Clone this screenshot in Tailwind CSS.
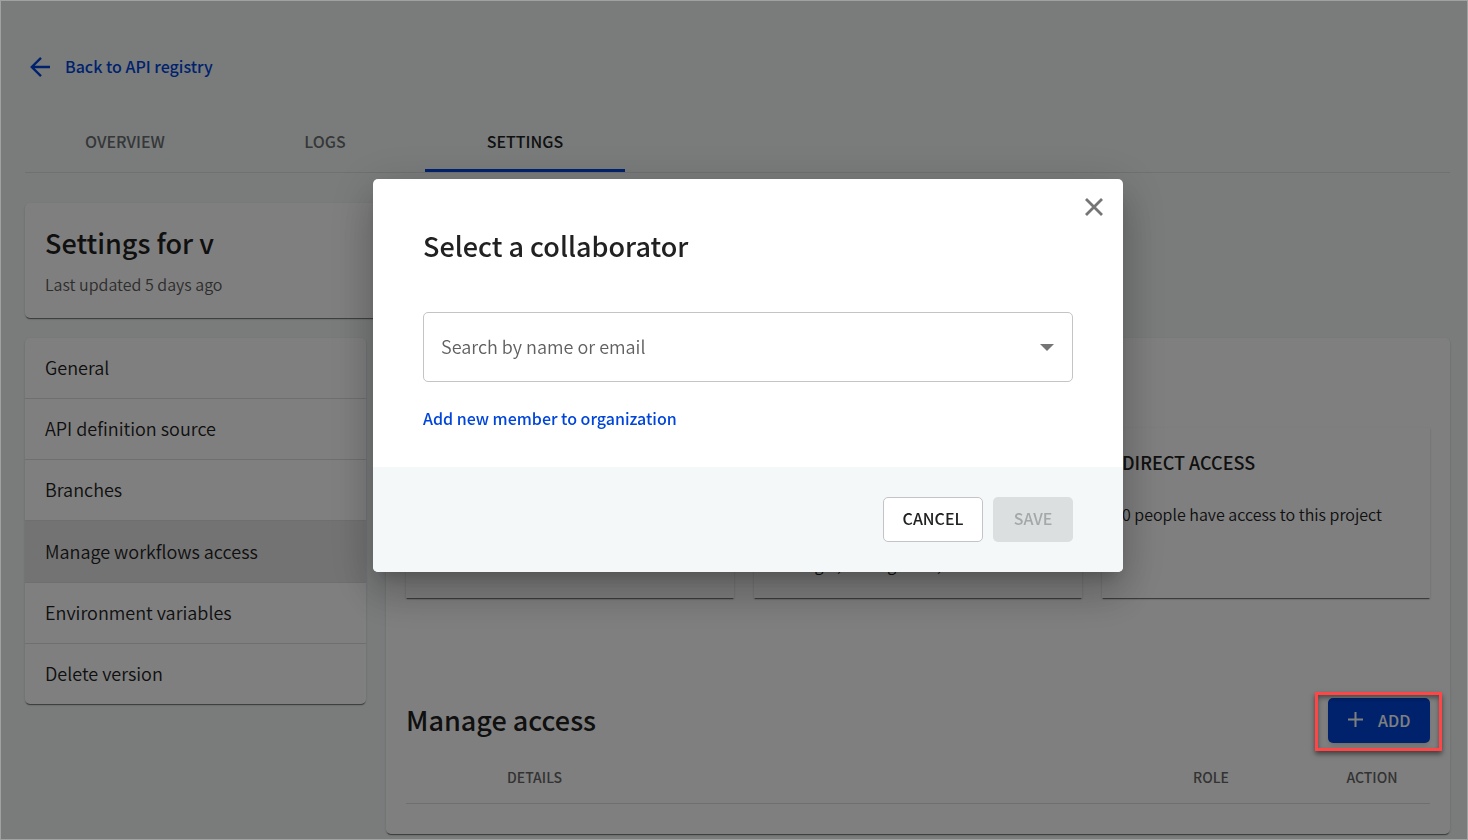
<!DOCTYPE html>
<html lang="en">
<head>
<meta charset="utf-8">
<meta name="viewport" content="width=device-width, initial-scale=1">
<title>API registry settings</title>
<script src="https://cdn.jsdelivr.net/npm/@tailwindcss/browser@4"></script>
</head>
<body class="min-h-screen bg-[#f4f8f9] font-['Noto_Sans_CJK_SC','Open_Sans',sans-serif] text-[#212121] overflow-hidden">
<main class="pl-[25px] pr-[18px] pt-[54px] pb-[6px]">
  <a href="#" class="flex w-fit items-center gap-[13px] h-6 pl-[3px] text-base font-medium text-[#0045db]">
    <svg class="size-6" viewBox="0 0 24 24" fill="none" stroke="currentColor" stroke-width="2.4" aria-hidden="true"><path d="M22 13H3.800M13 3.800L3.800 13L13 22.200"/></svg>
    Back to API registry
  </a>
  <nav class="mt-[34px] flex h-[61px] border-b border-[#e0e0e8] text-base font-medium text-[#6b6f70]">
    <button class="w-[200px] pb-[2px]">OVERVIEW</button>
    <button class="w-[200px] pb-[2px]">LOGS</button>
    <button class="w-[200px] border-b-3 pt-px border-[#0045db] text-[#212121]">SETTINGS</button>
  </nav>
  <section class="mt-[30px] h-[115px] max-w-4xl rounded-[5px] bg-white px-5 pt-[22px] shadow-[0_2px_1px_-1px_rgba(0,0,0,0.4),0_1px_1px_rgba(0,0,0,0.14),0_1px_3px_rgba(0,0,0,0.12)]">
    <h1 class="text-[27px] leading-9 font-medium">Settings for v</h1>
    <p class="mt-[11px] text-base leading-6 font-[350] text-[#5a5a5a]">Last updated 5 days ago</p>
  </section>
  <div class="mt-5 flex items-start gap-5">
    <ul class="w-[341px] shrink-0 overflow-hidden rounded-[5px] bg-white text-lg font-[350] shadow-[0_2px_1px_-1px_rgba(0,0,0,0.4),0_1px_1px_rgba(0,0,0,0.14),0_1px_3px_rgba(0,0,0,0.12)]">
      <li class="border-b border-[#dedede]"><a href="#" class="flex h-[60px] items-center px-5 pb-[2px]">General</a></li>
      <li class="border-b border-[#dedede]"><a href="#" class="flex h-[60px] items-center px-5 pb-[2px]">API definition source</a></li>
      <li class="border-b border-[#dedede]"><a href="#" class="flex h-[60px] items-center px-5 pb-[2px]">Branches</a></li>
      <li class="border-b border-[#dedede] bg-[#e6e6e6]"><a href="#" class="flex h-[61px] items-center px-5 pb-px">Manage workflows access</a></li>
      <li class="border-b border-[#dedede]"><a href="#" class="flex h-[60px] items-center px-5 pb-[2px]">Environment variables</a></li>
      <li><a href="#" class="flex h-[60px] items-center px-5 pb-[2px]">Delete version</a></li>
    </ul>
    <section class="min-w-0 grow rounded-[5px] bg-white px-5 pt-[90px] pb-[30px] shadow-[0_2px_1px_-1px_rgba(0,0,0,0.4),0_1px_1px_rgba(0,0,0,0.14),0_1px_3px_rgba(0,0,0,0.12)]">
      <div class="grid h-[170px] grid-cols-3 gap-5">
        <article class="bg-white shadow-[0_2px_1px_-1px_rgba(0,0,0,0.4),0_1px_1px_rgba(0,0,0,0.14),0_1px_3px_rgba(0,0,0,0.12)]"></article>
        <article class="bg-white px-5 pt-[22px] shadow-[0_2px_1px_-1px_rgba(0,0,0,0.4),0_1px_1px_rgba(0,0,0,0.14),0_1px_3px_rgba(0,0,0,0.12)]">
          <p class="mt-[102px] text-base leading-6 font-[350]">Manager, manage role,</p>
        </article>
        <article class="bg-white px-5 pt-[22px] shadow-[0_2px_1px_-1px_rgba(0,0,0,0.4),0_1px_1px_rgba(0,0,0,0.14),0_1px_3px_rgba(0,0,0,0.12)]">
          <h3 class="text-lg leading-6 font-medium">DIRECT ACCESS</h3>
          <p class="mt-7 text-base leading-6 font-[350]">0 people have access to this project</p>
        </article>
      </div>
      <div class="mt-[100px] flex h-[45px] items-center justify-between">
        <h2 class="pb-[2px] text-[27px] leading-9 font-medium">Manage access</h2>
        <div class="relative">
          <button class="flex h-[45px] w-[102px] items-center gap-3 rounded-[5px] bg-[#0045db] pl-[17px] pb-[2px] text-base font-medium text-white shadow-md">
            <svg class="size-[21px]" viewBox="0 0 21 21" fill="none" stroke="currentColor" stroke-width="2" aria-hidden="true"><path d="M10.500 3v15M3 10.500h15"/></svg>ADD
          </button>
          <div class="pointer-events-none absolute -left-[13px] -right-3 -top-[6px] -bottom-[8px] z-40 border-3 border-[#ff4545] shadow-[0_3px_5px_rgba(0,0,0,0.5),inset_0_3px_5px_rgba(0,0,0,0.4)]"></div>
        </div>
      </div>
      <table class="mt-[9px] w-full table-fixed text-sm font-medium text-[#666]">
        <thead><tr class="h-[51px] border-b border-[#dedede]">
          <th class="w-[101px]"></th>
          <th class="text-left font-medium">DETAILS</th>
          <th class="w-[136px] text-center font-medium">ROLE</th>
          <th class="w-[151px] pl-[35px] text-center font-medium">ACTION</th>
        </tr></thead>
      </table>
    </section>
  </div>
</main>
<div class="fixed inset-0 z-30 flex items-start justify-center bg-black/50 pt-[179px] pl-7">
  <div role="dialog" aria-modal="true" aria-labelledby="dialog-title" class="relative w-[750px] overflow-visible rounded-[5px] bg-white shadow-[0_11px_15px_-7px_rgba(0,0,0,0.2),0_24px_38px_3px_rgba(0,0,0,0.14),0_9px_46px_8px_rgba(0,0,0,0.12)]">
    <button aria-label="Close" class="absolute top-4 right-[17px] text-[#757575]">
      <svg class="size-6" viewBox="0 0 24 24" fill="none" stroke="currentColor" stroke-width="2.800" aria-hidden="true"><path d="M4 4l16 16M20 4L4 20"/></svg>
    </button>
    <div class="h-72 px-[50px] pt-[49px]">
      <h2 id="dialog-title" class="text-[27px] leading-9 font-medium">Select a collaborator</h2>
      <div class="relative mt-12">
        <input type="text" aria-label="Search by name or email" placeholder="Search by name or email" class="block h-[70px] w-full rounded-[5px] border border-[#c4c4c4] bg-white px-[17px] pb-[2px] text-lg font-[350] placeholder:text-[#606060]">
        <svg class="pointer-events-none absolute top-8 right-[19px] h-[7px] w-[14px] text-[#757575]" viewBox="0 0 14 7" fill="currentColor" aria-hidden="true"><path d="M0 0h14L7 7z"/></svg>
      </div>
      <a href="#" class="mt-6 block w-fit text-base leading-6 font-medium text-[#0045db]">Add new member to organization</a>
    </div>
    <div class="flex h-[105px] items-center justify-end gap-[10px] rounded-b-[5px] bg-[#f4f8f9] px-[50px] text-base font-medium">
      <button class="h-[45px] w-[100px] rounded-[5px] border border-[#c4c4c8] bg-white pb-[3px]">CANCEL</button>
      <button disabled class="h-[45px] w-20 rounded-[5px] bg-[#dbdfe0] text-[#a5a8a9] pb-[3px]">SAVE</button>
    </div>
  </div>
</div>
<div class="pointer-events-none fixed inset-0 z-50 border border-[#a0a2a1]"></div>
</body>
</html>
